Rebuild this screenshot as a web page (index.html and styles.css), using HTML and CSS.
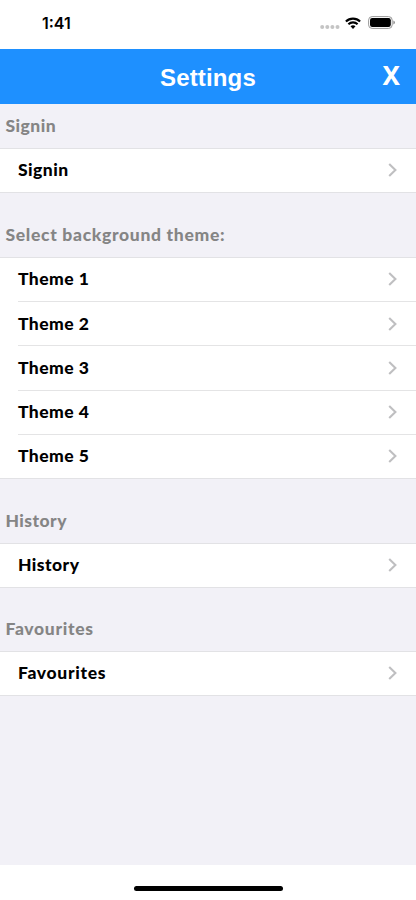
FILE: index.html
```
<!DOCTYPE html>
<html lang="en">
<head>
<meta charset="utf-8">
<title>Settings</title>
<link rel="stylesheet" href="styles.css">
</head>
<body>
<svg width="0" height="0" class="defs"><symbol id="chevron" viewBox="0 0 10 16"><path d="M1.2 2 7.4 8l-6.2 6" fill="none" stroke="#bfbfc1" stroke-width="2.1"/></symbol></svg>
<div class="status">
  <span class="time">1:41</span>
  <div class="indicators">
    <svg width="20" height="6" viewBox="0 0 20 6" fill="#c4c4c4"><circle cx="2.2" cy="3" r="2"/><circle cx="7.3" cy="3" r="2"/><circle cx="12.4" cy="3" r="2"/><circle cx="17.5" cy="3" r="2"/></svg>
    <svg class="wifi" width="16" height="12" viewBox="0 0 16 12" fill="none" stroke="#000" stroke-width="2.1"><path d="M.9 4.5a10.2 10.2 0 0 1 14.2 0M3.4 7.2a6.6 6.6 0 0 1 9.2 0"/><path d="M5.5 9.3a3.7 3.7 0 0 1 5 0L8 11.9z" fill="#000" stroke="none"/></svg>
    <svg class="battery" width="28" height="13" viewBox="0 0 28 13"><rect x=".6" y=".6" width="23.6" height="11.8" rx="3.5" fill="none" stroke="#999"/><rect x="2" y="2" width="20.8" height="9" rx="2.2"/><path d="M25.4 4.5q1.5.6 1.5 2t-1.5 2z" fill="#888"/></svg>
  </div>
</div>
<header class="nav"><h1>Settings</h1><span class="close">X</span></header>
<main>
  <h2 class="first">Signin</h2>
  <ul>
    <li><span>Signin</span><svg><use href="#chevron"/></svg></li>
  </ul>
  <h2 class="wide">Select background theme:</h2>
  <ul>
    <li><span>Theme 1</span><svg><use href="#chevron"/></svg></li>
    <li><span>Theme 2</span><svg><use href="#chevron"/></svg></li>
    <li><span>Theme 3</span><svg><use href="#chevron"/></svg></li>
    <li><span>Theme 4</span><svg><use href="#chevron"/></svg></li>
    <li><span>Theme 5</span><svg><use href="#chevron"/></svg></li>
  </ul>
  <h2>History</h2>
  <ul>
    <li><span>History</span><svg><use href="#chevron"/></svg></li>
  </ul>
  <h2 class="last wide">Favourites</h2>
  <ul>
    <li><span class="wide">Favourites</span><svg><use href="#chevron"/></svg></li>
  </ul>
</main>
<footer><div class="home"></div></footer>
</body>
</html>
```
FILE: styles.css
```
* { box-sizing: border-box; }
body { margin: 0; height: 900px; display: flex; flex-direction: column; background: #fff; color: #000; font-family: Lato, sans-serif; overflow: hidden; }
.defs { display: none; }
.status { height: 49px; flex: none; display: flex; justify-content: space-between; padding: 0 20px 0 42px; }
.time { font: 600 16px/20px Inter, sans-serif; margin-top: 13px; }
.indicators { display: flex; align-items: flex-start; padding-top: 16px; }
.indicators svg:first-child { margin-top: 8px; }
.wifi { margin: 1px 7px 0 5px; }
.nav { height: 55px; flex: none; display: grid; grid-template-columns: 1fr auto 1fr; align-items: center; background: #1e90ff; color: #fff; }
.nav h1 { grid-column: 2; margin: 3px 0 0; font: bold 24px/28px "Liberation Sans", sans-serif; letter-spacing: .15px; }
.close { justify-self: end; margin: -4px 16px 0 0; font: bold 26px/28px "Noto Sans", sans-serif; }
main { flex: 1; background: #f2f1f7; }
h2 { margin: 0; height: 64px; padding: 31px 0 0 5.5px; font-size: 17.5px; line-height: 22px; font-weight: 900; letter-spacing: .45px; color: #858585; }
h2.first { height: 44px; padding-top: 11px; }
h2.last { height: 63px; padding-top: 30px; }
.wide { letter-spacing: .68px; }
ul { margin: 0; padding: 0; list-style: none; background: #fff; border-top: 1px solid #e2e2e5; border-bottom: 1px solid #e2e2e5; }
li { height: 44.25px; margin-left: 18px; padding-right: 18px; display: flex; align-items: center; justify-content: space-between; font-size: 17.5px; line-height: 22px; font-weight: 900; letter-spacing: .45px; border-top: 1px solid #e4e4e5; }
li:first-child { height: 43px; padding-bottom: 1px; border-top: 0; }
li svg { width: 10px; height: 16px; }
h2.wide { letter-spacing: .68px; }
footer { flex: none; height: 35px; background: #fff; }
.home { width: 149px; height: 5px; margin: 21px auto 0; background: #000; border-radius: 3px; }
```
